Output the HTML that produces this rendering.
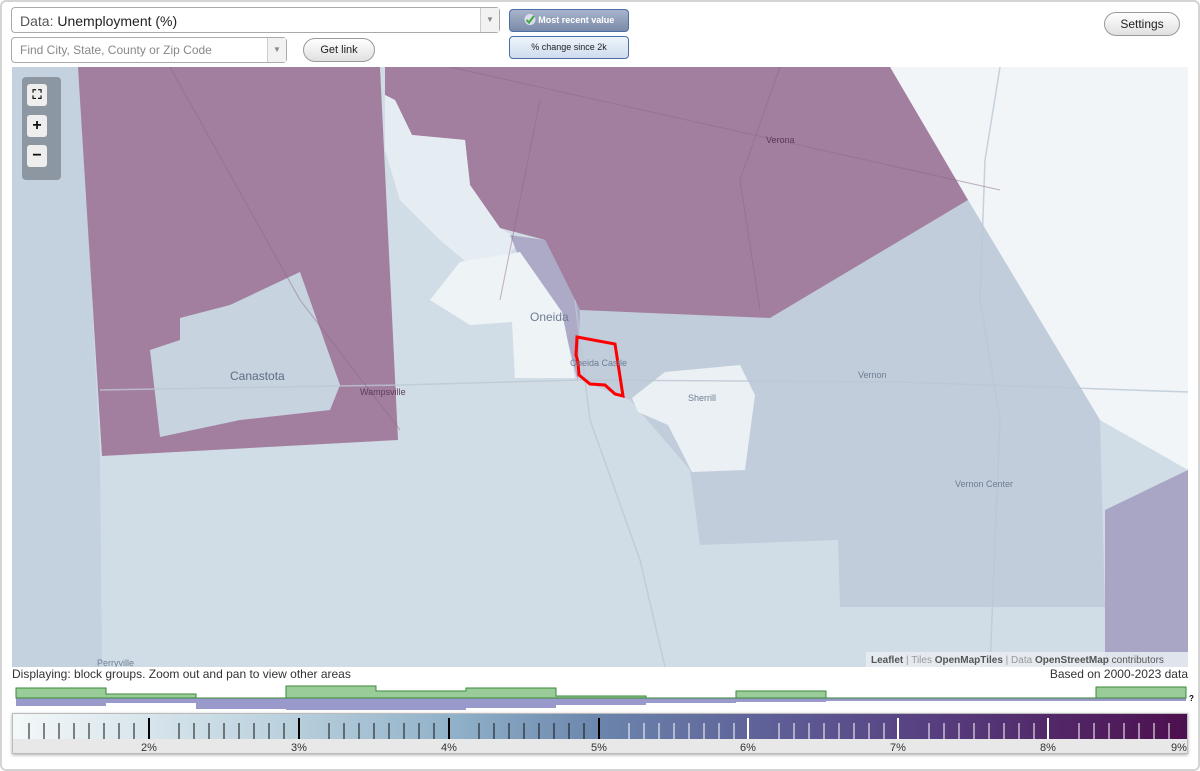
<!DOCTYPE html>
<html><head><meta charset="utf-8"><style>
body{margin:0;width:1200px;height:771px;background:#fff;font-family:"Liberation Sans",sans-serif;position:relative;overflow:hidden}
.frame{position:absolute;left:0;top:0;width:1196px;height:767px;border:2px solid #d4d4d4;border-radius:6px}
.sel{position:absolute;background:#fff;border:1px solid #aaa;border-radius:4px;box-sizing:border-box}
.sel .arr{position:absolute;right:0;top:0;bottom:0;width:18px;border-left:1px solid #ccc;background:#f2f2f2;color:#888;font-size:8px;text-align:center}
.btn{position:absolute;border:1px solid #999;border-radius:12px;background:linear-gradient(#fff,#e0e0e0);font-size:11px;text-align:center;box-sizing:border-box;color:#222}
.tb{position:absolute;border:1px solid #4a6fa5;border-radius:4px;box-sizing:border-box;font-size:9px;text-align:center}
.zb{position:absolute;left:5px;width:20px;height:22px;background:#eee;border-radius:3px;text-align:center;font-weight:bold;font-size:16px;line-height:22px;color:#111}
</style></head><body>
<div class="frame"></div>
<div class="sel" style="left:11px;top:7px;width:489px;height:26px"><span style="position:absolute;left:8px;top:5px;font-size:14px;color:#222"><span style="color:#555">Data:</span> Unemployment (%)</span><div class="arr" style="line-height:24px">▼</div></div>
<div class="sel" style="left:11px;top:37px;width:276px;height:26px"><span style="position:absolute;left:8px;top:5px;font-size:12px;color:#888">Find City, State, County or Zip Code</span><div class="arr" style="line-height:24px">▼</div></div>
<div class="btn" style="left:303px;top:38px;width:72px;height:24px;line-height:22px">Get link</div>
<div class="tb" style="left:509px;top:9px;width:120px;height:23px;background:linear-gradient(#a8b4cc,#7b8aa8);color:#fff;font-weight:bold;line-height:21px"><svg width="12" height="11" viewBox="0 0 12 11" style="vertical-align:-2px"><circle cx="6" cy="5.5" r="5.5" fill="#dde"/><path d="M2.5,6 L5,8.5 L10,2" stroke="#4a4" stroke-width="2.2" fill="none"/></svg> Most recent value</div>
<div class="tb" style="left:509px;top:36px;width:120px;height:23px;background:linear-gradient(#eef4fc,#cfdcee);color:#222;line-height:21px">% change since 2k</div>
<div class="btn" style="left:1104px;top:12px;width:76px;height:24px;line-height:22px;font-size:12px">Settings</div>

<svg style="position:absolute;left:12px;top:67px" width="1176" height="600" viewBox="12 67 1176 600">
<rect x="12" y="67" width="1176" height="600" fill="#d1dde6"/>
<polygon points="12,67 80,67 100,456 102,667 12,667" fill="#c4d1de"/>
<polygon points="890,67 1188,67 1188,470 1100,420 968,200" fill="#f1f5f7"/>
<polygon points="560,250 770,318 968,200 1100,420 1105,607 840,607 838,540 700,545 690,470 630,400 580,380" fill="#c1cddb"/>
<polygon points="1105,510 1188,470 1188,667 1105,667" fill="#a8a5c5"/>
<polygon points="78,67 380,67 398,440 102,456" fill="#a37f9f"/>
<polygon points="180,318 230,305 300,272 340,385 330,410 240,420 160,437 150,350 180,340" fill="#c7d3df"/>
<polygon points="385,67 890,67 968,200 770,318 580,310 545,240 500,228 470,185 465,140 412,135 395,100 385,95" fill="#a37f9f"/>
<polygon points="385,95 395,100 412,135 465,140 470,185 500,228 520,240 505,260 470,265 440,240 400,200 385,150" fill="#e6edf2"/>
<polygon points="510,235 545,240 580,310 578,382 565,330 520,260" fill="#adaac8"/>
<polygon points="430,300 460,262 520,252 562,312 575,378 515,378 512,322 470,325" fill="#eef3f6"/>
<polygon points="632,398 665,372 740,365 755,395 745,470 692,472 668,425 638,412" fill="#eaf0f4"/>
<g stroke="#bcc8d4" stroke-width="1.5" fill="none" opacity=".8">
<path d="M575,300 L590,420 L640,560 L665,667"/>
<path d="M100,390 L400,385 L580,380 L900,382 L1188,392"/>
<path d="M1000,67 L985,160 L980,300 L1000,420 L990,667"/>
</g>
<g stroke="#8a6887" stroke-width="1" fill="none" opacity=".5">
<path d="M170,67 L300,300 L400,430"/><path d="M450,67 L1000,190"/><path d="M540,100 L500,300"/><path d="M780,67 L740,180 L760,310"/>
</g>
<polygon points="577,337 615,344 623,396 615,394 605,385 590,384 579,375 578,362 576,355" fill="none" stroke="#f00" stroke-width="3"/>
<g font-family="Liberation Sans,sans-serif" fill="#6e7d92">
<text x="530" y="321" font-size="12">Oneida</text>
<text x="570" y="366" font-size="9">Oneida Castle</text>
<text x="688" y="401" font-size="9">Sherrill</text>
<text x="230" y="380" font-size="12" fill="#5e6d82">Canastota</text>
<text x="360" y="395" font-size="9" fill="#5a3a5a">Wampsville</text>
<text x="766" y="143" font-size="9" fill="#5a3a5a">Verona</text>
<text x="858" y="378" font-size="9">Vernon</text>
<text x="955" y="487" font-size="9">Vernon Center</text>
<text x="97" y="666" font-size="9">Perryville</text>
</g>
<rect x="866" y="652" width="322" height="15" fill="#e6ebef" opacity=".9"/>
<text x="871" y="663" font-size="10" fill="#555" font-family="Liberation Sans,sans-serif"><tspan font-weight="bold">Leaflet</tspan><tspan fill="#999"> | Tiles </tspan><tspan font-weight="bold">OpenMapTiles</tspan><tspan fill="#999"> | Data </tspan><tspan font-weight="bold">OpenStreetMap</tspan> contributors</text>
</svg>
<div style="position:absolute;left:22px;top:77px;width:39px;height:103px;background:#8c97a2;border-radius:4px">
<div class="zb" style="top:7px;font-size:13px">⛶</div><div class="zb" style="top:38px">+</div><div class="zb" style="top:68px">−</div></div>

<div style="position:absolute;left:12px;top:667px;font-size:12px;color:#333">Displaying: block groups. Zoom out and pan to view other areas</div>
<div style="position:absolute;right:12px;top:667px;font-size:12px;color:#333">Based on 2000-2023 data</div>
<svg style="position:absolute;left:0;top:684px" width="1200" height="30">
<path d="M16,14 L16,22 L106,22 L106,19 L196,19 L196,25 L286,25 L286,26 L466,26 L466,24 L556,24 L556,21 L646,21 L646,19 L736,19 L736,18 L826,18 L826,17 L1186,17 L1186,14 Z" fill="#9a99cc"/>
<path d="M16,14 L16,4 L106,4 L106,10 L196,10 L196,14 L286,14 L286,2 L376,2 L376,7 L466,7 L466,4 L556,4 L556,12 L646,12 L646,14 L736,14 L736,7 L826,7 L826,14 L1096,14 L1096,3 L1186,3 L1186,14 Z" fill="#99cc99" stroke="#3a8a3a" stroke-width="1"/>
<text x="1189" y="17" font-size="8" font-weight="bold">?</text></svg>
<div style="position:absolute;left:12px;top:713px;width:1176px;height:41px;border:1px solid #bbb;box-sizing:border-box;box-shadow:0 1px 3px #aaa;background:#e8e8e8">
<div style="height:25px;background:linear-gradient(90deg,#f3f8f9 0%,#bdd3df 22%,#8fb0c8 38%,#6b85ac 50%,#5f6399 63%,#573f80 78%,#4d0f4e 100%)"></div>
<svg style="position:absolute;left:0;top:0" width="1176" height="40">
<g stroke-width="1">
<path d="M16,9V25M31,9V25M46,9V25M61,9V25M76,9V25M91,9V25M106,9V25M121,9V25M166,9V25M181,9V25M196,9V25M211,9V25M226,9V25M241,9V25M256,9V25M271,9V25M316,9V25M331,9V25M346,9V25M361,9V25M376,9V25M391,9V25M406,9V25M421,9V25M466,9V25M481,9V25M496,9V25M511,9V25M526,9V25M541,9V25M556,9V25M571,9V25" stroke="#111"/>
<path d="M136,4V25M286,4V25M436,4V25M586,4V25" stroke="#000" stroke-width="2"/>
<path d="M616,9V25M631,9V25M646,9V25M661,9V25M676,9V25M691,9V25M706,9V25M721,9V25M766,9V25M781,9V25M796,9V25M811,9V25M826,9V25M841,9V25M856,9V25M871,9V25M916,9V25M931,9V25M946,9V25M961,9V25M976,9V25M991,9V25M1006,9V25M1021,9V25M1066,9V25M1081,9V25M1096,9V25M1111,9V25M1126,9V25M1141,9V25M1156,9V25" stroke="#fff"/>
<path d="M735,4V25M885,4V25M1035,4V25" stroke="#fff" stroke-width="2"/>
</g>
<g font-size="11" fill="#333" font-family="Liberation Sans,sans-serif" text-anchor="middle">
<text x="136" y="37">2%</text><text x="286" y="37">3%</text><text x="436" y="37">4%</text><text x="586" y="37">5%</text><text x="735" y="37">6%</text><text x="885" y="37">7%</text><text x="1035" y="37">8%</text><text x="1166" y="37">9%</text></g></svg>
</div>
</body></html>
